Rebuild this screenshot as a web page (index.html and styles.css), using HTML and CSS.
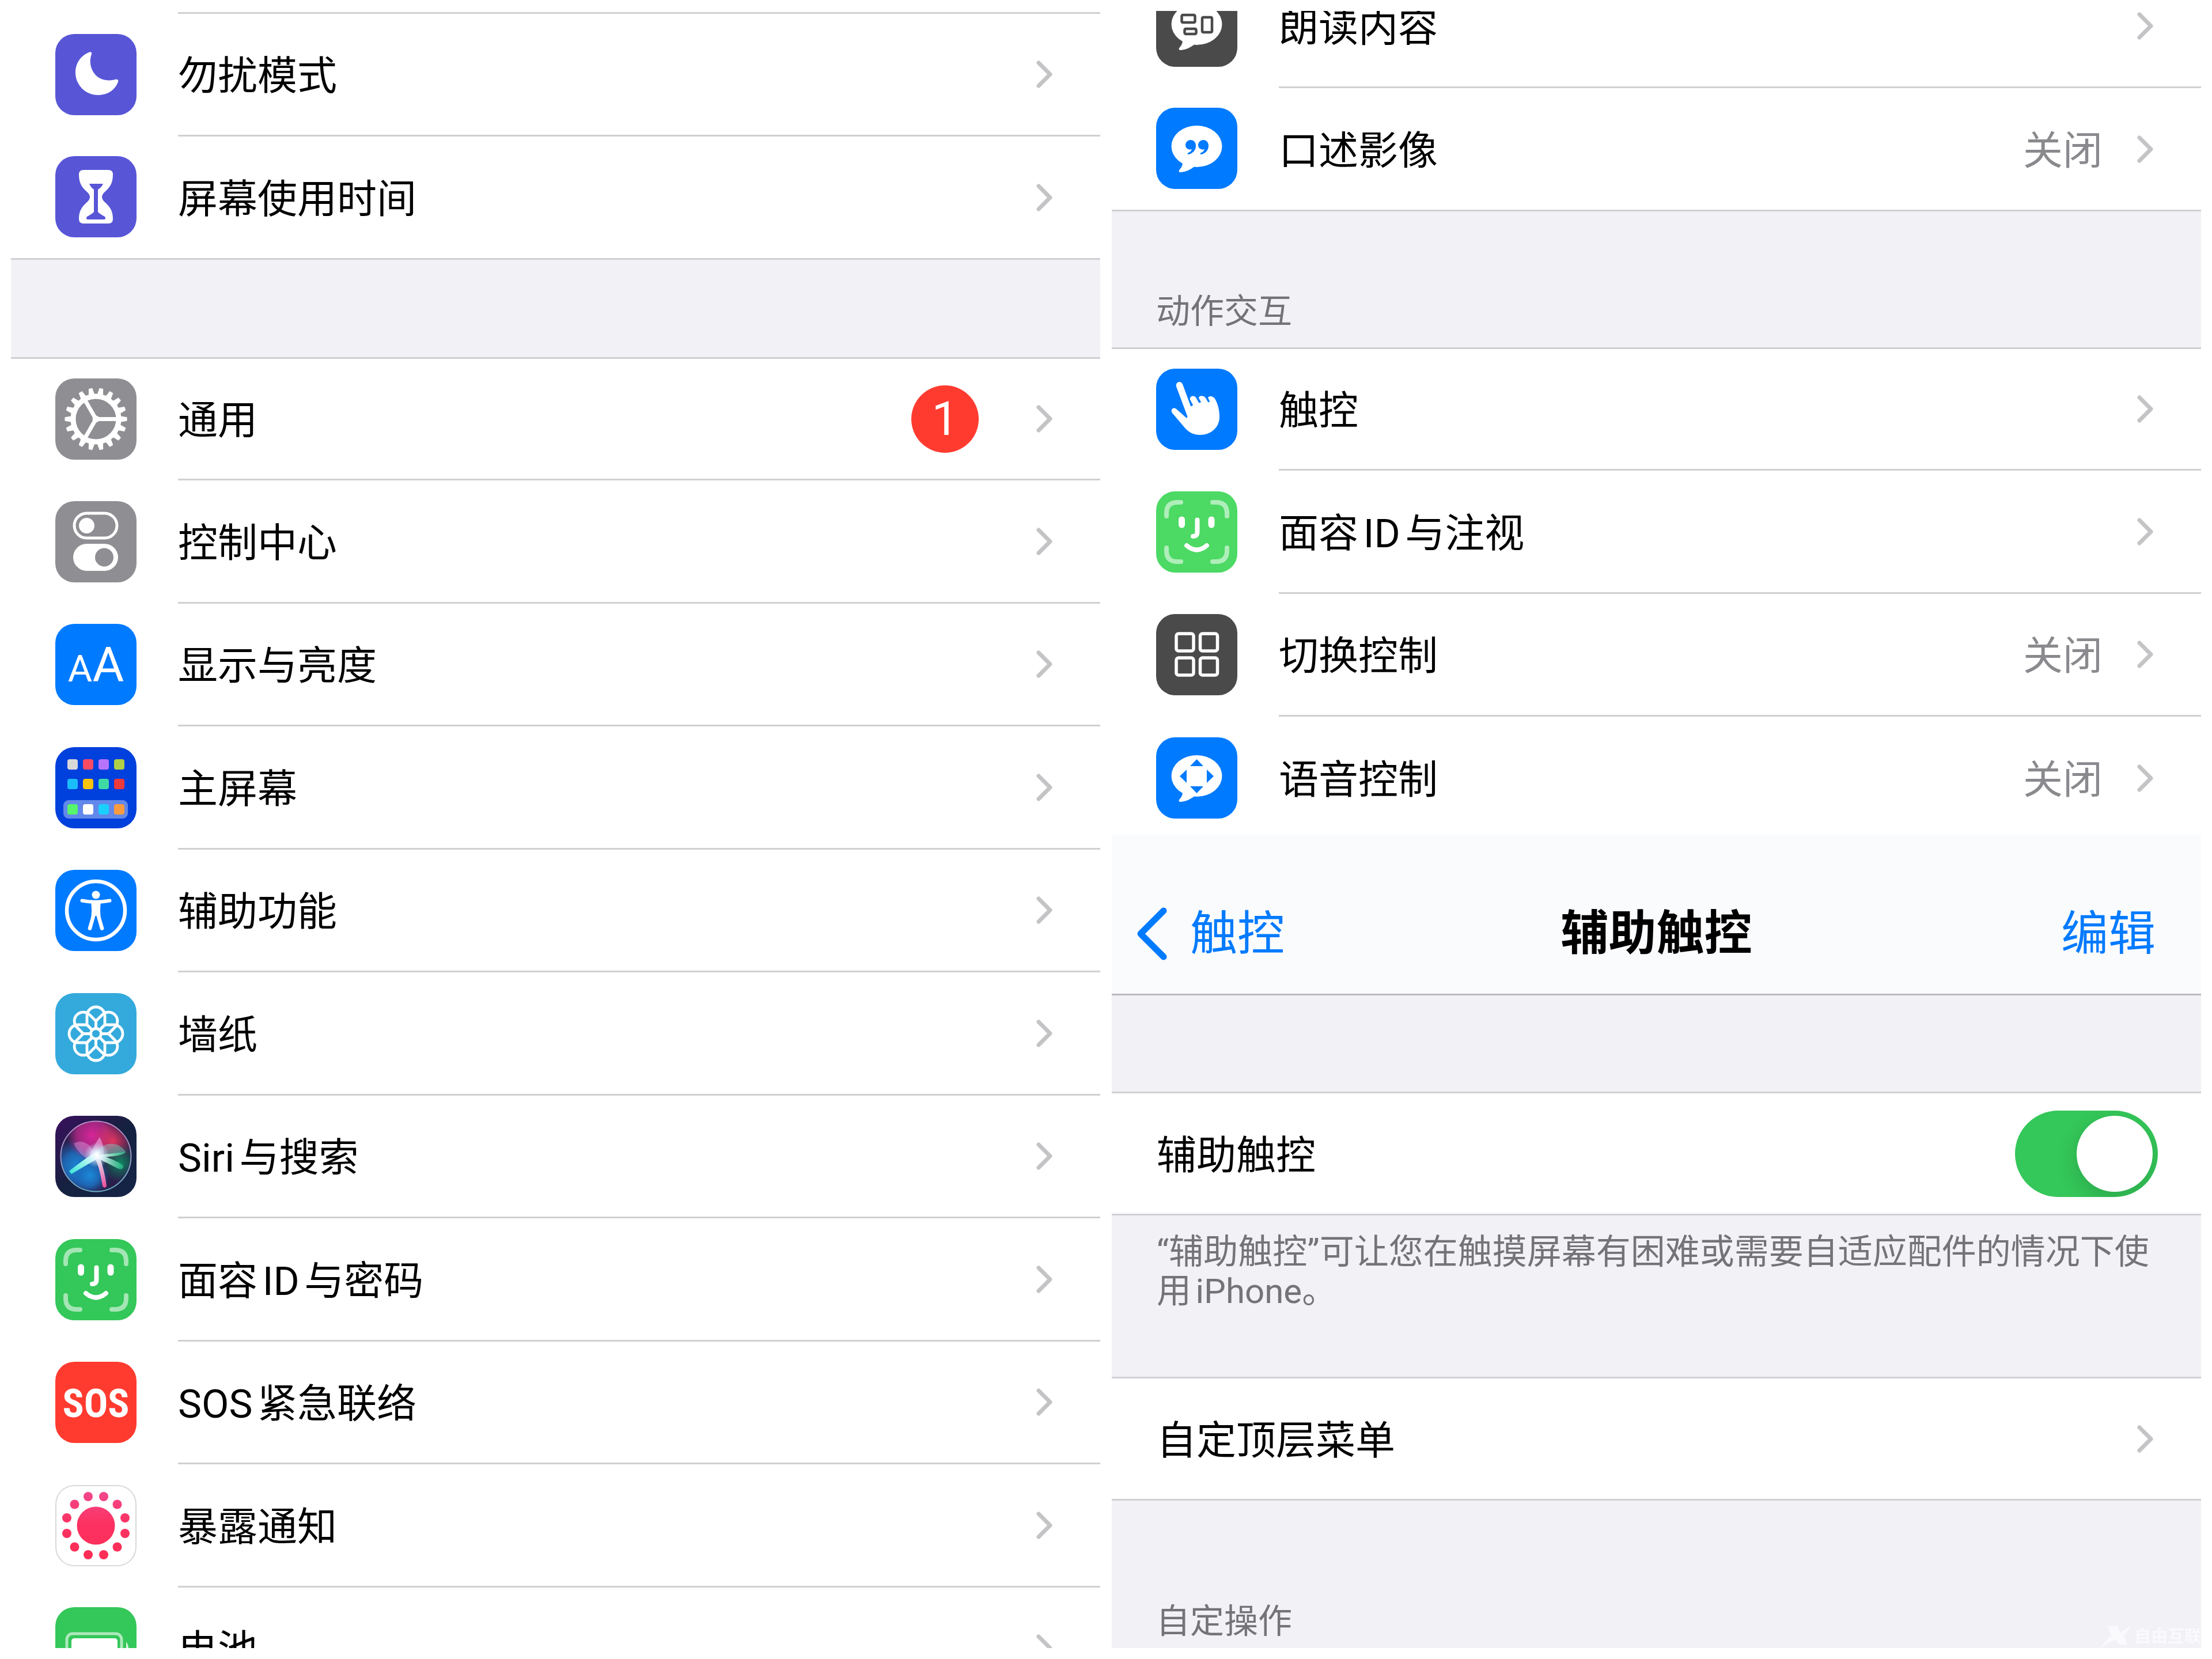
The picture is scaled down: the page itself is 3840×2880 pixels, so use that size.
FILE: index.html
```html
<!DOCTYPE html>
<html lang="zh-CN">
<head>
<meta charset="utf-8">
<title>设置</title>
<meta name="viewport" content="width=device-width, initial-scale=1">
<link rel="stylesheet" href="styles.css">
</head>
<body>
<svg class="defs" aria-hidden="true">
  <defs>
    <symbol id="chevron" viewBox="0 0 28 48"><path d="M4 4 L24 24 L4 44" fill="none" stroke="currentColor" stroke-width="7" stroke-linecap="round" stroke-linejoin="round"/></symbol>
    <symbol id="face" viewBox="0 0 141 141">
      <g fill="none" stroke="#fff" stroke-width="8" stroke-linecap="round">
        <path opacity=".55" d="M18 43V38Q18 19 37 19H43M98 19H104Q123 19 123 38V43M123 98V103Q123 122 104 122H98M43 122H37Q18 122 18 103V98"/>
        <path d="M71.500 49.500V70Q71.500 78 64 78"/>
        <path d="M53 94Q70.500 109 88 94"/>
        <path stroke-width="11" d="M44.500 49V58M96 49V58"/>
      </g>
    </symbol>
    <symbol id="bubble" viewBox="0 0 141 141">
      <ellipse cx="70.500" cy="67" rx="44" ry="36" fill="#fff"/>
      <path d="M46 92Q47 101 41 107Q37 112 43 112Q56 111 68 101Z" fill="#fff"/>
    </symbol>
  </defs>
</svg>

<main class="board">
  <section class="pane">
    <ul class="list list--top">
      <li class="row row--tail"><span class="row__body"></span></li>
      <li><a class="row" href="#dnd">
        <svg class="icon icon--indigo" viewBox="0 0 141 141"><path fill="#fff" d="M58 32C61 30 64 32 63 35C60 43 60 52 63 60C69 76 84 84 104 79C108 78 110 80 109 83C104 97 91 106 74 106C52 106 35 88 35 67C35 51 44 38 58 32Z"/></svg>
        <span class="row__body"><span class="row__label">勿扰模式</span><svg class="chevron"><use href="#chevron"/></svg></span></a></li>
      <li><a class="row" href="#screentime">
        <svg class="icon icon--indigo" viewBox="0 0 141 141"><path fill="#fff" d="M49 24H92Q100 24 100 32C100 48 94 55 85 63Q81 67 81 71Q81 75 85 79C94 87 100 94 100 109Q100 117 92 117H49Q41 117 41 109C41 94 47 87 56 79Q60 75 60 71Q60 67 56 63C47 55 41 48 41 32Q41 24 49 24Z"/><path fill="#5856d6" d="M59 48H83Q80 55 74 58V97Q78 101 86 105Q89 110 84 110H57Q52 110 55 105Q63 101 67 97V58Q62 55 59 48Z"/></svg>
        <span class="row__body"><span class="row__label">屏幕使用时间</span><svg class="chevron"><use href="#chevron"/></svg></span></a></li>
    </ul>
    <div class="gap"></div>
    <ul class="list">
      <li><a class="row" href="#general">
        <svg class="icon icon--gray" viewBox="0 0 141 141">
          <defs><path id="teeth" d="M-5.500 -41L-3.300 -54H3.300L5.500 -41ZM-5.500 41L-3.300 54H3.300L5.500 41Z"/></defs>
          <g transform="translate(70.5 70.5)" fill="#fff">
            <circle r="39.500" fill="none" stroke="#fff" stroke-width="9"/>
            <use href="#teeth" transform="rotate(10)"/><use href="#teeth" transform="rotate(30)"/><use href="#teeth" transform="rotate(50)"/><use href="#teeth" transform="rotate(70)"/><use href="#teeth" transform="rotate(90)"/><use href="#teeth" transform="rotate(110)"/><use href="#teeth" transform="rotate(130)"/><use href="#teeth" transform="rotate(150)"/><use href="#teeth" transform="rotate(170)"/>
            <path d="M0 0H38M0 0L-19 -33M0 0L-19 33" stroke="#fff" stroke-width="7"/>
            <circle r="6"/>
          </g></svg>
        <span class="row__body"><span class="row__label">通用</span><span class="badge">1</span><svg class="chevron"><use href="#chevron"/></svg></span></a></li>
      <li><a class="row" href="#control">
        <svg class="icon icon--gray" viewBox="0 0 141 141"><rect x="33" y="21" width="74" height="43" rx="21.500" fill="none" stroke="#fff" stroke-width="5"/><circle cx="54.500" cy="42.500" r="13.500" fill="#fff"/><rect x="31" y="74" width="78" height="47" rx="23.500" fill="#fff"/><circle cx="85" cy="97.500" r="16" fill="#8e8e93"/></svg>
        <span class="row__body"><span class="row__label">控制中心</span><svg class="chevron"><use href="#chevron"/></svg></span></a></li>
      <li><a class="row" href="#display">
        <svg class="icon icon--blue" viewBox="0 0 141 141"><g class="aa"><text x="43" y="100" font-size="65">A</text><text x="92" y="100" font-size="84">A</text></g></svg>
        <span class="row__body"><span class="row__label">显示与亮度</span><svg class="chevron"><use href="#chevron"/></svg></span></a></li>
      <li><a class="row" href="#home">
        <svg class="icon icon--navy" viewBox="0 0 141 141">
          <rect x="14" y="92" width="112" height="32" rx="9" fill="#fff" opacity=".38"/>
          <rect x="21" y="21" width="18" height="18" rx="4" fill="#d8d8d8"/><rect x="48" y="21" width="18" height="18" rx="4" fill="#fa4b64"/><rect x="75" y="21" width="18" height="18" rx="4" fill="#b574fb"/><rect x="102" y="21" width="18" height="18" rx="4" fill="#b0cf46"/>
          <rect x="21" y="55" width="18" height="18" rx="4" fill="#1bbcfb"/><rect x="48" y="55" width="18" height="18" rx="4" fill="#fcc40c"/><rect x="75" y="55" width="18" height="18" rx="4" fill="#3fd9a4"/><rect x="102" y="55" width="18" height="18" rx="4" fill="#f0393a"/>
          <rect x="21" y="99" width="18" height="18" rx="4" fill="#56f56b"/><rect x="48" y="99" width="18" height="18" rx="4" fill="#fff"/><rect x="75" y="99" width="18" height="18" rx="4" fill="#1acffc"/><rect x="102" y="99" width="18" height="18" rx="4" fill="#fd9b40"/></svg>
        <span class="row__body"><span class="row__label">主屏幕</span><svg class="chevron"><use href="#chevron"/></svg></span></a></li>
      <li><a class="row" href="#accessibility">
        <svg class="icon icon--blue" viewBox="0 0 141 141"><circle cx="70.500" cy="70.500" r="50.500" fill="none" stroke="#fff" stroke-width="6.500"/><circle cx="70.500" cy="43.500" r="7" fill="#fff"/><path d="M46.500 53.500Q70 58 94.500 53.500" fill="none" stroke="#fff" stroke-width="6" stroke-linecap="round"/><path fill="#fff" d="M62 56H79Q77 71 79 83L84 100A3 3 0 0 1 78 103L71.500 80H69.500L63 103A3 3 0 0 1 57 100L62 83Q64 71 62 56Z"/></svg>
        <span class="row__body"><span class="row__label">辅助功能</span><svg class="chevron"><use href="#chevron"/></svg></span></a></li>
      <li><a class="row" href="#wallpaper">
        <svg class="icon icon--sky" viewBox="0 0 141 141">
          <defs><path id="petal" d="M-5.600 -5.600L-15.500 -15.500V-31A15.500 15.500 0 0 1 15.500 -31V-15.500L5.600 -5.600"/></defs>
          <g transform="translate(70.5 70.5)" fill="none" stroke="#fff" stroke-width="4.800">
            <use href="#petal"/><use href="#petal" transform="rotate(45)"/><use href="#petal" transform="rotate(90)"/><use href="#petal" transform="rotate(135)"/><use href="#petal" transform="rotate(180)"/><use href="#petal" transform="rotate(225)"/><use href="#petal" transform="rotate(270)"/><use href="#petal" transform="rotate(315)"/>
            <circle r="9" fill="#34aadc"/>
          </g></svg>
        <span class="row__body"><span class="row__label">墙纸</span><svg class="chevron"><use href="#chevron"/></svg></span></a></li>
      <li><a class="row" href="#siri">
        <svg class="icon" viewBox="0 0 141 141">
          <defs>
            <linearGradient id="sbg" x1="0" y1="0" x2="1" y2="1"><stop offset="0" stop-color="#3a0f5e"/><stop offset=".5" stop-color="#15213f"/><stop offset="1" stop-color="#152447"/></linearGradient>
            <radialGradient id="sm"><stop offset="0" stop-color="#d8259a"/><stop offset=".6" stop-color="#b82888" stop-opacity=".8"/><stop offset="1" stop-color="#b82888" stop-opacity="0"/></radialGradient>
            <radialGradient id="sr"><stop offset="0" stop-color="#e03560"/><stop offset="1" stop-color="#e03560" stop-opacity="0"/></radialGradient>
            <radialGradient id="sb"><stop offset="0" stop-color="#1b8ad8"/><stop offset=".5" stop-color="#1c6fc0" stop-opacity=".85"/><stop offset="1" stop-color="#1c5cb0" stop-opacity="0"/></radialGradient>
            <radialGradient id="sg"><stop offset="0" stop-color="#0f8a62"/><stop offset="1" stop-color="#0f6a52" stop-opacity="0"/></radialGradient>
            <radialGradient id="sw"><stop offset="0" stop-color="#fff"/><stop offset=".35" stop-color="#e8f6ff" stop-opacity=".8"/><stop offset="1" stop-color="#bfe8ff" stop-opacity="0"/></radialGradient>
            <linearGradient id="sc" x1="1" y1="0" x2="0" y2="1"><stop offset="0" stop-color="#fff"/><stop offset="1" stop-color="#35e6d6"/></linearGradient>
            <linearGradient id="sp" x1="0" y1="0" x2="0" y2="1"><stop offset="0" stop-color="#fff"/><stop offset="1" stop-color="#ff4fa0"/></linearGradient>
            <linearGradient id="sq" x1="0" y1="0" x2="1" y2="0"><stop offset="0" stop-color="#fff"/><stop offset="1" stop-color="#1fc48a" stop-opacity=".7"/></linearGradient>
            <linearGradient id="so" x1="0" y1="0" x2="0" y2="1"><stop offset="0" stop-color="#c28ac8"/><stop offset="1" stop-color="#6fb0c8"/></linearGradient>
            <clipPath id="orb"><circle cx="70.500" cy="70.500" r="60"/></clipPath>
          </defs>
          <rect width="141" height="141" fill="url(#sbg)"/>
          <circle cx="70.500" cy="70.500" r="60" fill="#2a1f4c"/>
          <g clip-path="url(#orb)">
            <circle cx="38" cy="88" r="48" fill="url(#sb)"/><circle cx="60" cy="104" r="34" fill="url(#sb)"/>
            <circle cx="64" cy="34" r="44" fill="url(#sm)"/><circle cx="100" cy="44" r="36" fill="url(#sr)"/>
            <circle cx="112" cy="82" r="34" fill="url(#sg)"/>
            <path d="M32 48C46 40 62 48 68 66L58 76C46 70 36 58 32 48Z" fill="#e9a8ec" opacity=".4"/>
            <path d="M77 37Q66 52 56 78L84 70Q85 50 77 37Z" fill="#f3b4f0" opacity=".55"/>
            <path d="M70 62C90 42 110 46 122 62C118 70 96 70 78 70Z" fill="#7fe3d8" opacity=".4"/>
          </g>
          <path d="M74 62Q62 66 24 96L28 101Q60 82 78 72Z" fill="url(#sc)"/>
          <path d="M74 68Q96 72 118 86Q119 94 110 92Q90 82 74 74Z" fill="url(#sq)"/>
          <path d="M74 68L122 63Q116 71 76 72Z" fill="url(#sq)"/>
          <path d="M66 68Q76 84 82 122Q86 128 89 122Q86 96 76 68Z" fill="url(#sp)" opacity=".9"/>
          <circle cx="72" cy="68" r="22" fill="url(#sw)"/>
          <circle cx="70.500" cy="70.500" r="61" fill="none" stroke="url(#so)" stroke-width="2"/></svg>
        <span class="row__body"><span class="row__label">Siri与搜索</span><svg class="chevron"><use href="#chevron"/></svg></span></a></li>
      <li><a class="row" href="#faceid">
        <svg class="icon icon--green"><use href="#face"/></svg>
        <span class="row__body"><span class="row__label">面容ID与密码</span><svg class="chevron"><use href="#chevron"/></svg></span></a></li>
      <li><a class="row" href="#sos">
        <svg class="icon icon--red" viewBox="0 0 141 141"><text class="sos" x="70.500" y="96">SOS</text></svg>
        <span class="row__body"><span class="row__label">SOS紧急联络</span><svg class="chevron"><use href="#chevron"/></svg></span></a></li>
      <li><a class="row" href="#exposure">
        <svg class="icon icon--outline" viewBox="0 0 141 141">
          <defs><linearGradient id="ex" gradientUnits="userSpaceOnUse" x1="0" y1="12" x2="0" y2="128"><stop offset="0" stop-color="#f2488c"/><stop offset=".45" stop-color="#fc3263"/><stop offset="1" stop-color="#ff2d55"/></linearGradient></defs>
          <g fill="url(#ex)"><circle cx="70.500" cy="70.500" r="33"/>
          <circle cx="84" cy="20" r="8"/><circle cx="107.500" cy="33.500" r="8"/><circle cx="121" cy="57" r="8"/><circle cx="121" cy="84" r="8"/><circle cx="107.500" cy="107.500" r="8"/><circle cx="84" cy="121" r="8"/><circle cx="57" cy="121" r="8"/><circle cx="33.500" cy="107.500" r="8"/><circle cx="20" cy="84" r="8"/><circle cx="20" cy="57" r="8"/><circle cx="33.500" cy="33.500" r="8"/><circle cx="57" cy="20" r="8"/></g></svg>
        <span class="row__body"><span class="row__label">暴露通知</span><svg class="chevron"><use href="#chevron"/></svg></span></a></li>
      <li><a class="row" href="#battery">
        <svg class="icon icon--green" viewBox="0 0 141 141"><rect x="20" y="46" width="95" height="50" rx="10" fill="none" stroke="#fff" stroke-opacity=".6" stroke-width="5"/><rect x="28" y="54" width="80" height="34" rx="5" fill="#fff"/><path d="M123 60Q131 71 123 82Z" fill="#fff" opacity=".8"/></svg>
        <span class="row__body"><span class="row__label">电池</span><svg class="chevron"><use href="#chevron"/></svg></span></a></li>
    </ul>
  </section>

  <div class="stack">
    <section class="pane">
      <ul class="list list--scrolled">
        <li><a class="row" href="#spoken">
          <svg class="icon icon--dark" viewBox="0 0 141 141"><use href="#bubble"/><g fill="none" stroke="#4a4a4a" stroke-width="4.500"><rect x="44.500" y="51" width="23" height="13" rx="2"/><rect x="49.500" y="75" width="20" height="9" rx="2"/><rect x="80" y="55" width="17" height="26" rx="2"/></g></svg>
          <span class="row__body"><span class="row__label">朗读内容</span><svg class="chevron"><use href="#chevron"/></svg></span></a></li>
        <li><a class="row" href="#descriptions">
          <svg class="icon icon--blue" viewBox="0 0 141 141"><use href="#bubble"/><path fill="#007aff" d="M60 56C65 56 69 60 69 66C69 74 63 80 56 81Q53 80 56 78Q61 76 62 72C56 74 51 70 51 65C51 60 55 56 60 56ZM82 56C87 56 91 60 91 66C91 74 85 80 78 81Q75 80 78 78Q83 76 84 72C78 74 73 70 73 65C73 60 77 56 82 56Z"/></svg>
          <span class="row__body"><span class="row__label">口述影像</span><span class="row__value">关闭</span><svg class="chevron"><use href="#chevron"/></svg></span></a></li>
      </ul>
      <h2 class="heading heading--ruled">动作交互</h2>
      <ul class="list">
        <li><a class="row" href="#touch">
          <svg class="icon icon--blue" viewBox="0 0 141 141"><path fill="#fff" d="M35 31C33 23 43 20 46 27L60 65Q62 66 64 63L59 54C57 48 66 45 69 50L74 59Q76 60 78 58L74 51C74 46 83 46 86 51L90 58Q92 59 93 57L90 50C94 46 101 48 104 56C108 64 110 74 110 84C110 102 95 115 76 115C65 115 58 111 51 104L28 77C24 71 30 66 35 70L52 85Q55 86 54 82Z"/></svg>
          <span class="row__body"><span class="row__label">触控</span><svg class="chevron"><use href="#chevron"/></svg></span></a></li>
        <li><a class="row" href="#attention">
          <svg class="icon icon--lime"><use href="#face"/></svg>
          <span class="row__body"><span class="row__label">面容ID与注视</span><svg class="chevron"><use href="#chevron"/></svg></span></a></li>
        <li><a class="row" href="#switch">
          <svg class="icon icon--dark" viewBox="0 0 141 141"><g fill="none" stroke="#fff" stroke-width="5.500"><rect x="35" y="34" width="30" height="30" rx="4"/><rect x="76.500" y="34" width="30" height="30" rx="4"/><rect x="35" y="76" width="30" height="30" rx="4"/><rect x="76.500" y="76" width="30" height="30" rx="4"/></g></svg>
          <span class="row__body"><span class="row__label">切换控制</span><span class="row__value">关闭</span><svg class="chevron"><use href="#chevron"/></svg></span></a></li>
        <li><a class="row row--plain" href="#voice">
          <svg class="icon icon--blue" viewBox="0 0 141 141"><use href="#bubble"/><path fill="#007aff" d="M70.500 38L82 50H59ZM70.500 97L59 85H82ZM41 67.500L53 56V79ZM100 67.500L88 79V56Z"/></svg>
          <span class="row__body"><span class="row__label">语音控制</span><span class="row__value">关闭</span><svg class="chevron"><use href="#chevron"/></svg></span></a></li>
      </ul>
    </section>

    <section class="pane pane--tinted">
      <header class="nav">
        <a class="nav__back" href="#touch"><svg class="nav__chevron" viewBox="0 0 54 92"><path d="M48 6L8 46L48 86" fill="none" stroke="currentColor" stroke-width="11" stroke-linecap="round" stroke-linejoin="round"/></svg>触控</a>
        <h1 class="nav__title">辅助触控</h1>
        <button class="nav__edit" type="button">编辑</button>
      </header>
      <div class="gap gap--nav"></div>
      <div class="row row--single">
        <label class="row__label" for="assistive">辅助触控</label>
        <input class="switch" type="checkbox" role="switch" id="assistive" checked>
      </div>
      <p class="note">“辅助触控”可让您在触摸屏幕有困难或需要自适应配件的情况下使用iPhone。</p>
      <a class="row row--single" href="#menu"><span class="row__label">自定顶层菜单</span><svg class="chevron"><use href="#chevron"/></svg></a>
      <h2 class="heading heading--tall">自定操作</h2>
      <div class="watermark"><svg class="watermark__logo" viewBox="0 0 60 40"><path fill="currentColor" d="M14 2H30L36 13L56 0L42 19L48 34H33L27 25L0 40L20 18Z"/></svg>自由互联</div>
    </section>
  </div>
</main>
</body>
</html>
```

FILE: styles.css
```css
:root {
  --line: #d0d0d3;
  --tint: #f2f1f6;
  --blue: #007aff;
  --muted: #747478;
}

* {
  box-sizing: border-box;
}

body {
  margin: 0;
  background: #fff;
  color: #000;
  font-family: Roboto, "Noto Sans CJK SC", sans-serif;
  font-size: 69px;
  line-height: 100px;
  text-autospace: normal;
}

.defs {
  position: absolute;
  width: 0;
  height: 0;
}

.board {
  display: grid;
  grid-template-columns: 1fr 1fr;
  gap: 20px;
  height: 100vh;
  padding: 19px;
}

.stack {
  display: grid;
  grid-template-rows: 1431fr 1411fr;
  min-height: 0;
}

.pane {
  position: relative;
  min-height: 0;
  overflow: hidden;
  background: #fff;
}

.pane--tinted {
  background: var(--tint);
}

/* Lists */
.list {
  display: grid;
  grid-template-rows: 211px;
  grid-auto-rows: 214px 213px;
  margin: 0;
  padding: 0;
  list-style: none;
}

.list--top {
  grid-template-rows: 5px;
  grid-auto-rows: 213px 214px;
}

.list--scrolled {
  grid-template-rows: 213px;
  margin-top: -79px;
}

.row {
  display: flex;
  align-items: center;
  gap: 72px;
  height: 100%;
  padding-left: 77px;
  color: inherit;
  text-decoration: none;
}

.row--tail {
  padding-left: 290px;
}

.row__body {
  display: flex;
  flex: 1;
  align-items: center;
  height: 100%;
  padding-right: 83px;
  border-bottom: 3px solid var(--line);
}

.row__label,
.row__value {
  padding-top: 8px;
}

.row__label {
  flex: 1;
}

.row__value {
  margin-right: 60px;
  color: #8a8a8e;
}

.list li:last-child .row {
  border-bottom: 3px solid var(--line);
}

.list li:last-child .row__body,
.list li:last-child .row--plain {
  border-bottom: 0;
}

.row--single {
  height: 212px;
  padding: 0 83px 0 78px;
  border-bottom: 3px solid var(--line);
  background: #fff;
}

.chevron {
  flex: none;
  width: 28px;
  height: 48px;
  color: #c4c4c6;
}

.badge {
  width: 117px;
  height: 117px;
  margin-right: 100px;
  border-radius: 50%;
  background: #ff3b30;
  color: #fff;
  font-size: 82px;
  line-height: 117px;
  text-align: center;
}

/* Section gaps and captions */
.gap {
  height: 172px;
  border-bottom: 3px solid var(--line);
  background: var(--tint);
}

.gap--nav {
  height: 170px;
}

.heading {
  margin: 0;
  padding: 140px 80px 28px 77px;
  background: var(--tint);
  color: var(--muted);
  font-size: 59px;
  font-weight: 400;
  line-height: 68px;
}

.heading--ruled {
  border-bottom: 3px solid var(--line);
}

.heading--tall {
  padding-top: 176px;
}

.note {
  height: 283px;
  margin: 0;
  padding: 30px 75px 0 78px;
  border-bottom: 3px solid var(--line);
  color: var(--muted);
  font-size: 60px;
  line-height: 68px;
}

/* Icons */
.icon {
  flex: none;
  width: 141px;
  height: 141px;
  margin-bottom: 2px;
  border-radius: 33px;
}

.icon--indigo { background: #5856d6; }
.icon--gray { background: #8e8e93; }
.icon--blue { background: var(--blue); }
.icon--navy { background: #0040dd; }
.icon--sky { background: #34aadc; }
.icon--green { background: #34c759; }
.icon--lime { background: #4cd964; }
.icon--red { background: #ff3b30; }
.icon--dark { background: #4a4a4a; }
.icon--outline { box-shadow: inset 0 0 0 2px #d9d9db; }

.aa {
  fill: #fff;
  font-family: Roboto, sans-serif;
  font-weight: 400;
  text-anchor: middle;
}

.sos {
  fill: #fff;
  font-family: "Liberation Sans Narrow", "Roboto Condensed", Roboto, sans-serif;
  font-size: 69px;
  font-weight: 700;
  text-anchor: middle;
}

/* Navigation bar */
.nav {
  display: grid;
  grid-template-columns: 1fr auto 1fr;
  align-items: center;
  height: 278px;
  padding-top: 66px;
  border-bottom: 3px solid #b9babd;
  background: #fafbfd;
  font-size: 82px;
}

.nav__back {
  display: flex;
  align-items: center;
  gap: 40px;
  padding-left: 42px;
  color: var(--blue);
  text-decoration: none;
}

.nav__chevron {
  width: 54px;
  height: 92px;
}

.nav__title {
  margin: 0;
  font-size: 83px;
  font-weight: 700;
}

.nav__edit {
  justify-self: end;
  margin-right: 79px;
  padding: 0;
  border: 0;
  background: none;
  color: var(--blue);
  font: inherit;
}

/* Toggle */
.switch {
  flex: none;
  width: 248px;
  height: 150px;
  margin: 0 -8px 0 0;
  padding: 9px;
  overflow: hidden;
  appearance: none;
  border-radius: 75px;
  background: #34c759;
}

.switch::before {
  display: block;
  width: 132px;
  height: 132px;
  margin-left: auto;
  border-radius: 50%;
  background: #fff;
  box-shadow: 0 12px 36px rgba(0, 0, 0, 0.16);
  content: "";
}

.switch:not(:checked) {
  background: #e9e9eb;
}

.switch:not(:checked)::before {
  margin-left: 0;
}

.watermark {
  position: absolute;
  right: 0;
  bottom: 0;
  display: flex;
  align-items: center;
  color: #fafafd;
  font-size: 29px;
  font-weight: 700;
  line-height: 40px;
}

.watermark__logo {
  width: 60px;
  height: 40px;
}
```
